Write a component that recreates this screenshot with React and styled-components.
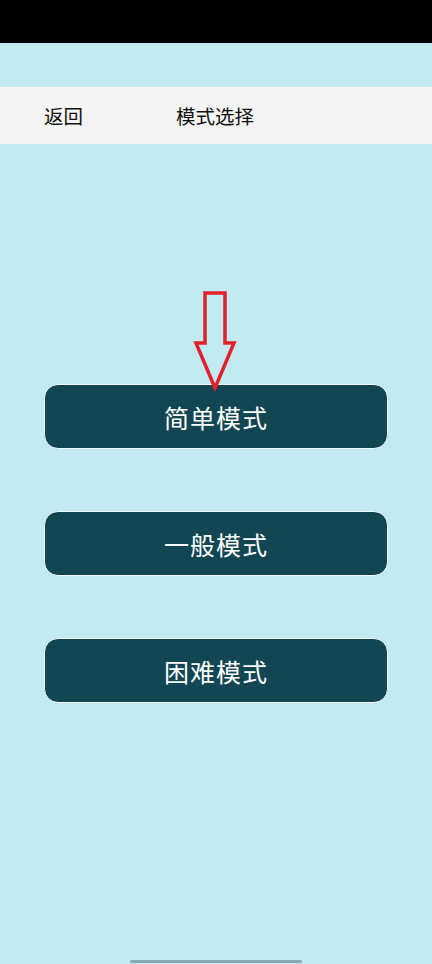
import React from "react";
import styled, { createGlobalStyle } from "styled-components";

const GlobalStyle = createGlobalStyle`
  html, body {
    margin: 0;
    padding: 0;
    background: #c2eaf1;
  }
  body {
    font-family: "Noto Sans CJK SC", "Noto Sans", sans-serif;
  }
`;

const Screen = styled.div`
  width: 432px;
  height: 964px;
  display: flex;
  flex-direction: column;
  background: #c2eaf1;
  overflow: hidden;
`;

const StatusBar = styled.div`
  height: 43px;
  background: #000;
  flex-shrink: 0;
`;

const NavBar = styled.div`
  margin-top: 44px;
  height: 57px;
  background: #f4f4f4;
  display: flex;
  align-items: center;
  padding-left: 44px;
  font-size: 19.5px;
  color: #111;
`;

const BackLink = styled.span`
  width: 132px;
`;

const Title = styled.span``;

const Content = styled.div`
  flex: 1;
  display: flex;
  flex-direction: column;
  align-items: center;
  padding-top: 147px;
`;

const Pointer = styled.svg`
  position: relative;
  z-index: 1;
  margin-bottom: -7px;
  margin-left: -3px;
`;

const ModeButton = styled.button`
  box-sizing: border-box;
  width: 344px;
  height: 65px;
  margin-bottom: ${(p) => (p.$last ? 0 : "62px")};
  border: 1.5px solid #f4fbfc;
  border-radius: 14px;
  background: #114652;
  color: #fff;
  font-family: "Noto Sans CJK SC", "Noto Sans", sans-serif;
  font-size: 25px;
  font-weight: 400;
  letter-spacing: 1px;
  display: flex;
  align-items: center;
  justify-content: center;
  cursor: pointer;
`;

const HomeIndicator = styled.div`
  width: 172px;
  height: 3px;
  border-radius: 2px;
  background: #86a8ae;
  margin: 0 auto 1px;
`;

const modes = ["简单模式", "一般模式", "困难模式"];

export default function App() {
  return (
    <>
      <GlobalStyle />
      <Screen>
        <StatusBar />
        <NavBar>
          <BackLink>返回</BackLink>
          <Title>模式选择</Title>
        </NavBar>
        <Content>
          <Pointer width="44" height="100" viewBox="0 0 44 100">
            <path
              d="M12 2 H32 V52 H41 L22 97 L3 52 H12 Z"
              fill="none"
              stroke="#e3202b"
              strokeWidth="3.5"
              strokeLinejoin="miter"
            />
          </Pointer>
          {modes.map((m, i) => (
            <ModeButton key={m} $last={i === modes.length - 1}>
              {m}
            </ModeButton>
          ))}
        </Content>
        <HomeIndicator />
      </Screen>
    </>
  );
}
